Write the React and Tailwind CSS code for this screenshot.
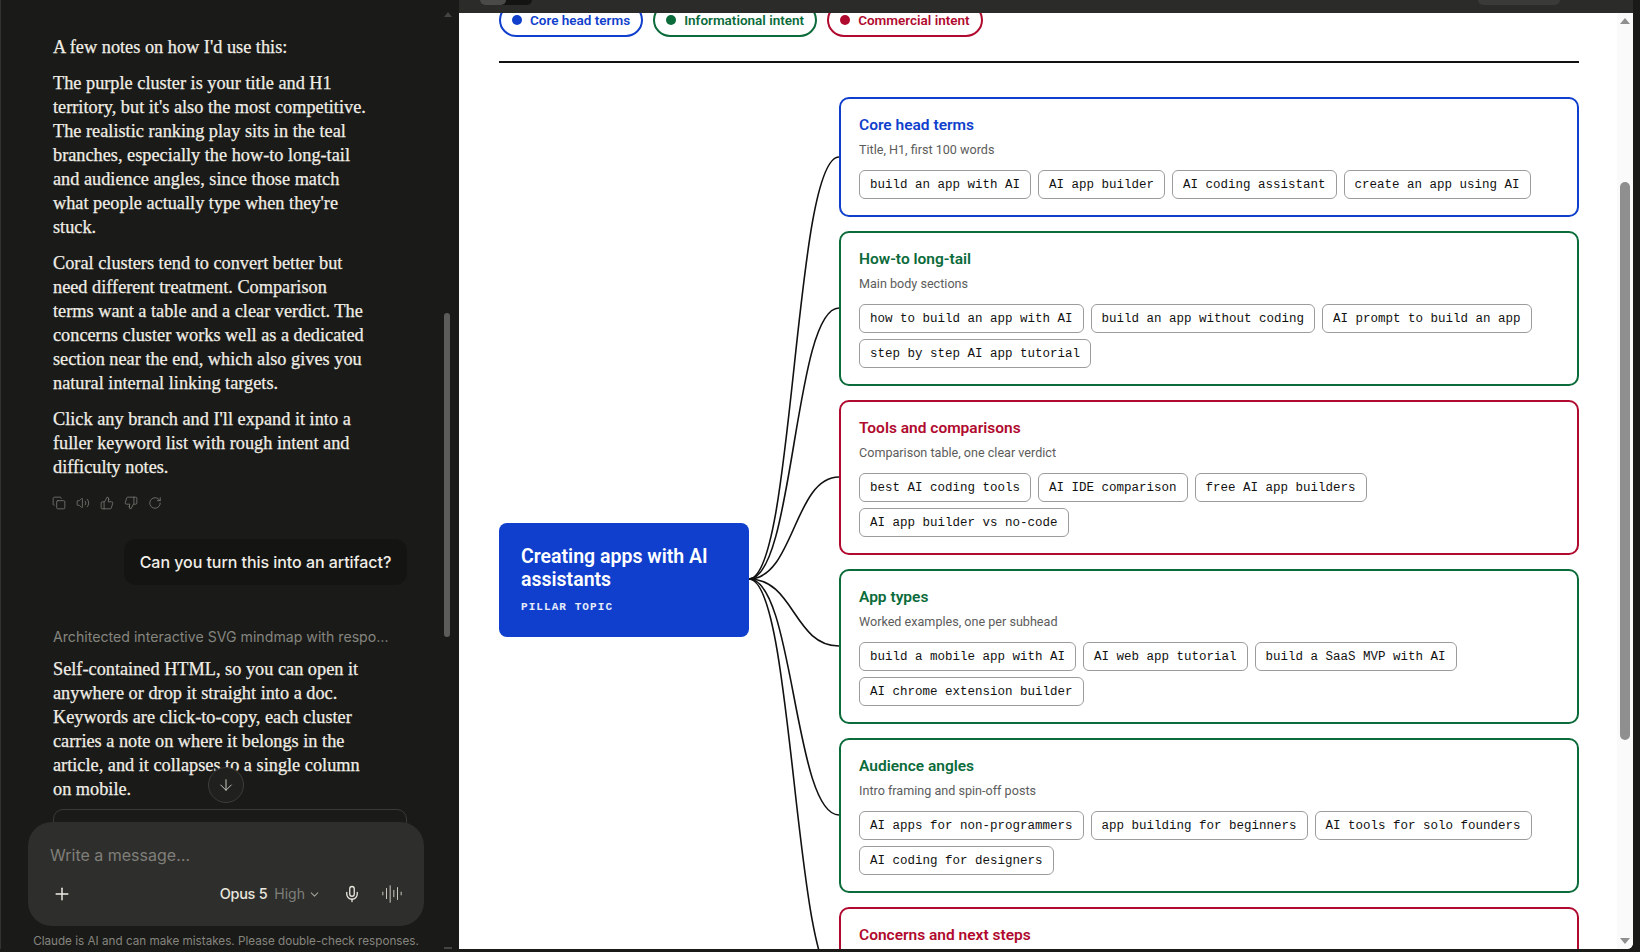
import { Copy, Volume2, ThumbsUp, ThumbsDown, RotateCw, ArrowDown, Plus, ChevronDown, Mic, AudioLines } from 'lucide-react';

const SERIF = "font-['Liberation_Serif',serif]";
const UI = "font-['Inter',sans-serif]";

const notes = [
  ["A few notes on how I'd use this:"],
  ['The purple cluster is your title and H1', "territory, but it's also the most competitive.", 'The realistic ranking play sits in the teal', 'branches, especially the how-to long-tail', 'and audience angles, since those match', "what people actually type when they're", 'stuck.'],
  ['Coral clusters tend to convert better but', 'need different treatment. Comparison', 'terms want a table and a clear verdict. The', 'concerns cluster works well as a dedicated', 'section near the end, which also gives you', 'natural internal linking targets.'],
  ["Click any branch and I'll expand it into a", 'fuller keyword list with rough intent and', 'difficulty notes.'],
];

const reply = ['Self-contained HTML, so you can open it', 'anywhere or drop it straight into a doc.', 'Keywords are click-to-copy, each cluster', 'carries a note on where it belongs in the', 'article, and it collapses to a single column', 'on mobile.'];

const tones = {
  blue: { border: 'border-[#0f3fcc]', text: 'text-[#0f3fcc]', dot: 'bg-[#0f3fcc]' },
  green: { border: 'border-[#0b6b3a]', text: 'text-[#0b6b3a]', dot: 'bg-[#0b6b3a]' },
  red: { border: 'border-[#b00a2e]', text: 'text-[#b00a2e]', dot: 'bg-[#b00a2e]' },
};

const legend = [
  { label: 'Core head terms', tone: 'blue' },
  { label: 'Informational intent', tone: 'green' },
  { label: 'Commercial intent', tone: 'red' },
];

const clusters = [
  { title: 'Core head terms', note: 'Title, H1, first 100 words', tone: 'blue', tags: ['build an app with AI', 'AI app builder', 'AI coding assistant', 'create an app using AI'] },
  { title: 'How-to long-tail', note: 'Main body sections', tone: 'green', tags: ['how to build an app with AI', 'build an app without coding', 'AI prompt to build an app', 'step by step AI app tutorial'] },
  { title: 'Tools and comparisons', note: 'Comparison table, one clear verdict', tone: 'red', tags: ['best AI coding tools', 'AI IDE comparison', 'free AI app builders', 'AI app builder vs no-code'] },
  { title: 'App types', note: 'Worked examples, one per subhead', tone: 'green', tags: ['build a mobile app with AI', 'AI web app tutorial', 'build a SaaS MVP with AI', 'AI chrome extension builder'] },
  { title: 'Audience angles', note: 'Intro framing and spin-off posts', tone: 'green', tags: ['AI apps for non-programmers', 'app building for beginners', 'AI tools for solo founders', 'AI coding for designers'] },
  { title: 'Concerns and next steps', note: 'Dedicated section near the end', tone: 'red', tags: ['is AI generated code safe', 'AI app security risks', 'how to deploy an AI app', 'AI app maintenance'] },
];

function Lines({ lines }) {
  return (
    <p className={`${SERIF} text-[18.3px] leading-[24px] text-[#f0eee6] [-webkit-text-stroke:0.25px_#f0eee6] whitespace-nowrap`}>
      {lines.map((line) => (
        <span key={line} className="block">{line}</span>
      ))}
    </p>
  );
}

function Chat() {
  return (
    <div className="relative w-[459px] h-[949px] shrink-0 overflow-hidden border-l border-[#333] bg-[#1a1a18]">
      <div className="pl-[52px] pt-[35px] w-[406px]">
        <div className="flex flex-col gap-[12px]">
          {notes.map((lines) => <Lines key={lines[0]} lines={lines} />)}
        </div>
        <div className="flex items-center gap-[10px] mt-[17px] -ml-[1px] text-[#85857f]">
          <Copy size={14} strokeWidth={1.25} />
          <Volume2 size={14} strokeWidth={1.25} />
          <ThumbsUp size={14} strokeWidth={1.25} />
          <ThumbsDown size={14} strokeWidth={1.25} />
          <RotateCw size={14} strokeWidth={1.25} />
        </div>
        <div className="flex justify-end mt-[29px]">
          <div className={`${UI} h-[46px] w-[283px] rounded-[12px] bg-[#141413] flex items-center justify-center text-[16px] font-medium tracking-[-0.05px] text-[#f0eee6]`}>
            Can you turn this into an artifact?
          </div>
        </div>
        <div className={`${UI} mt-[42px] h-[20px] leading-[20px] text-[14.15px] text-[#85857f] whitespace-nowrap`}>
          Architected interactive SVG mindmap with respo…
        </div>
        <div className="mt-[10px]">
          <Lines lines={reply} />
        </div>
        <div className="mt-[8px] h-[80px] rounded-[10px] border border-[#3a3a38]" />
      </div>

      {/* scrollbar */}
      <div className="absolute top-[12px] left-[443px] w-0 h-0 border-x-[4px] border-x-transparent border-b-[5px] border-b-[#444]" />
      <div className="absolute top-[313px] left-[443px] w-[6px] h-[324px] rounded-full bg-[#5c5c5a]" />
      <div className="absolute bottom-0 left-[443px] w-[8px] h-[2px] bg-[#444]" />

      <button className="absolute left-[207px] top-[767px] w-[36px] h-[36px] rounded-full border border-[#3d3d3a] bg-[#20201e] flex items-center justify-center text-[#d0cfc8]">
        <ArrowDown size={18} strokeWidth={1.25} />
      </button>

      {/* composer */}
      <div className="absolute left-[27px] top-[822px] w-[396px] h-[104px] rounded-[24px] bg-[#2e2e2c] px-[22px]">
        <div className={`${UI} mt-[22px] h-[22px] leading-[22px] text-[16px] text-[#7f7f7a]`}>Write a message…</div>
        <div className="flex items-center mt-[17px] h-[22px]">
          <Plus size={20} strokeWidth={1.75} className="ml-[2px] text-[#f0eee6]" />
          <span className={`${UI} ml-auto leading-[22px] text-[14.5px] font-medium tracking-[-0.3px] text-[#e8e6dd]`}>Opus 5</span>
          <span className={`${UI} ml-[7px] leading-[22px] -mt-[1px] text-[14px] text-[#7f7f7a]`}>High</span>
          <ChevronDown size={13} className="ml-[3px] text-[#a0a09a]" />
          <Mic size={18} strokeWidth={1.75} className="ml-[22px] text-[#e8e6dd]" />
          <AudioLines size={22} strokeWidth={1} className="ml-[20px] mr-[-1px] text-[#d8d6cd]" />
        </div>
      </div>
      <div className={`${UI} absolute left-0 w-[450px] text-center top-[933px] text-[11.7px] leading-[16px] text-[#85857f] whitespace-nowrap`}>
        Claude is AI and can make mistakes. Please double-check responses.
      </div>
    </div>
  );
}

function Cluster({ cluster }) {
  const tone = tones[cluster.tone];
  return (
    <div className={`border-2 ${tone.border} rounded-[10px] bg-white px-[18px] pt-[16px] pb-[16px]`}>
      <div className={`text-[15.5px] leading-[20px] font-semibold ${tone.text}`}>{cluster.title}</div>
      <div className="mt-[6px] text-[12.6px] leading-[18px] text-[#5c5c5c]">{cluster.note}</div>
      <div className="mt-[11px] flex flex-wrap gap-x-[7px] gap-y-[6px]">
        {cluster.tags.map((tag) => (
          <span key={tag} className="h-[29px] px-[10px] pt-[2px] flex items-center rounded-[6px] border border-[#9c9c9c] font-['Liberation_Mono',monospace] text-[12.5px] text-[#111]">
            {tag}
          </span>
        ))}
      </div>
    </div>
  );
}

function Artifact() {
  return (
    <div className="flex-1 h-[949px] flex flex-col overflow-hidden rounded-br-[6px] mr-[7px] bg-white">
      <div className="relative z-10 h-[13px] shrink-0 bg-[#2b2b29]">
        <div className="absolute left-[21px] top-0 w-[52px] h-[5px] rounded-b-[5px] bg-[#141413]">
          <div className="w-[26px] h-[5px] rounded-b-[5px] bg-[#4a4a48]" />
        </div>
        <div className="absolute left-[1019px] top-0 w-[82px] h-[5px] rounded-b-[5px] bg-[#3a3a38]" />
      </div>
      <div className="flex-1 min-h-0 flex">
        <div className="flex-1 min-w-0 pl-[40px] pr-[38px] overflow-hidden">
          <div className="-mt-[10px] flex gap-[10px] pb-[24px] border-b-2 border-[#111]">
            {legend.map((item) => (
              <div key={item.label} className={`h-[34px] pl-[11px] pr-[11px] flex items-center gap-[8px] rounded-full border-2 ${tones[item.tone].border} ${tones[item.tone].text} text-[13.5px] font-semibold whitespace-nowrap`}>
                <span className={`w-[10px] h-[10px] rounded-full ${tones[item.tone].dot}`} />
                {item.label}
              </div>
            ))}
          </div>
          <div className="relative mt-[34px] flex items-center">
            <svg className="absolute left-0 top-0 w-[1080px] h-[965px]" viewBox="0 0 1080 965" fill="none">
              {[60, 211, 380, 549, 718, 887].map((y) => (
                <path key={y} d={`M250 482 C 295 482, 295 ${y}, 340 ${y}`} stroke="#111" strokeWidth="1.6" />
              ))}
            </svg>
            <div className="relative w-[250px] h-[114px] shrink-0 rounded-[8px] bg-[#0f3fcc] pl-[22px] pr-[16px] pt-[22px]">
              <div className="text-[19.5px] leading-[23px] font-semibold text-white">Creating apps with AI assistants</div>
              <div className="mt-[9px] font-['Liberation_Mono',monospace] font-bold text-[11px] leading-[14px] tracking-[1.07px] text-white/90">PILLAR TOPIC</div>
            </div>
            <div className="relative ml-[90px] flex-1 min-w-0 flex flex-col gap-[14px]">
              {clusters.map((cluster) => <Cluster key={cluster.title} cluster={cluster} />)}
            </div>
          </div>
        </div>
        {/* scrollbar */}
        <div className="relative w-[16px] shrink-0 bg-[#fafafa]">
          <div className="absolute left-[3px] top-[5px] w-0 h-0 border-x-[5px] border-x-transparent border-b-[6px] border-b-[#8f8f8f]" />
          <div className="absolute left-[3px] top-[169px] w-[10px] h-[558px] rounded-full bg-[#8f8f8f]" />
          <div className="absolute left-[3px] bottom-[5px] w-0 h-0 border-x-[5px] border-x-transparent border-t-[6px] border-t-[#8f8f8f]" />
        </div>
      </div>
    </div>
  );
}

export default function App() {
  return (
    <div className="w-[1640px] h-[952px] flex overflow-hidden bg-[#1a1a18] font-['Roboto',sans-serif]">
      <Chat />
      <Artifact />
    </div>
  );
}
